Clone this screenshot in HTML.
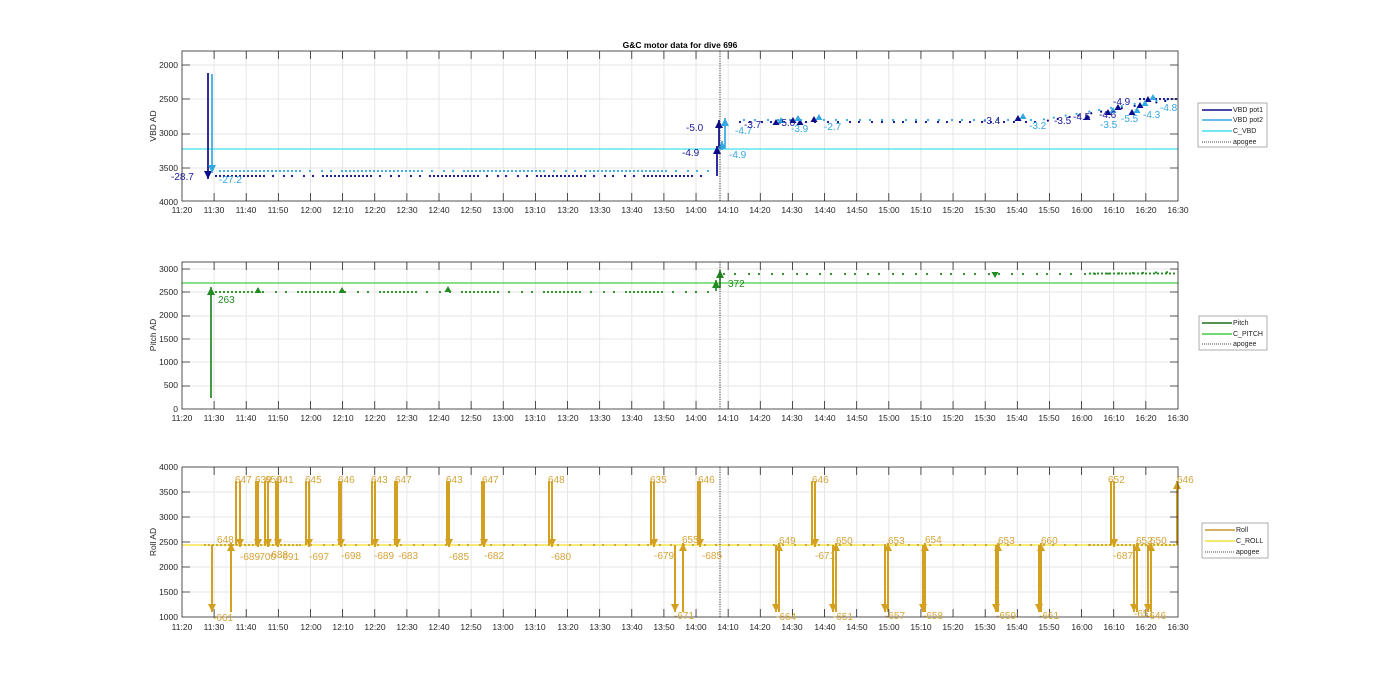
<!DOCTYPE html>
<html><head><meta charset="utf-8"><style>
html,body{margin:0;padding:0;background:#fff;}
svg{display:block;font-family:"Liberation Sans",sans-serif;}
.t{font-size:8.5px;fill:#262626;}
</style></head><body>
<svg width="1400" height="693" viewBox="0 0 1400 693" xmlns="http://www.w3.org/2000/svg">
<defs>
<marker id="mdk" markerUnits="userSpaceOnUse" markerWidth="8" markerHeight="8" refX="8" refY="4" orient="auto"><path d="M0,0L8,4L0,8z" fill="#0a0a8a"/></marker>
<marker id="mlb" markerUnits="userSpaceOnUse" markerWidth="8" markerHeight="8" refX="8" refY="4" orient="auto"><path d="M0,0L8,4L0,8z" fill="#33a7e0"/></marker>
<marker id="mgr" markerUnits="userSpaceOnUse" markerWidth="8" markerHeight="8" refX="8" refY="4" orient="auto"><path d="M0,0L8,4L0,8z" fill="#228b22"/></marker>
<marker id="mau" markerUnits="userSpaceOnUse" markerWidth="8" markerHeight="8" refX="8" refY="4" orient="auto"><path d="M0,0L8,4L0,8z" fill="#d4a020"/></marker>
<polygon id="tu" points="-3.5,2 3.5,2 0,-4"/>
<polygon id="td" points="-3.5,-2 3.5,-2 0,4"/>
</defs>
<rect width="1400" height="693" fill="#fff"/>
<!-- vertical grid -->
<g stroke="#e6e6e6" stroke-dasharray="1 31.129">
<line x1="213.6" x2="1160" y1="126" y2="126" stroke-width="150"/>
<line x1="213.6" x2="1160" y1="335.5" y2="335.5" stroke-width="147"/>
<line x1="213.6" x2="1160" y1="542" y2="542" stroke-width="150"/>
</g>
<!-- horizontal grid -->
<g stroke="#e6e6e6" stroke-width="1">
<path d="M182,65H1178M182,99H1178M182,134H1178M182,168H1178M182,269H1178M182,292H1178M182,316H1178M182,339H1178M182,362H1178M182,386H1178M182,492H1178M182,517H1178M182,542H1178M182,567H1178M182,592H1178"/>
</g>
<!-- C lines -->
<line x1="182" x2="1178" y1="149" y2="149" stroke="#40e0e8" stroke-width="1.2"/>
<line x1="182" x2="1178" y1="283" y2="283" stroke="#44cc44" stroke-width="1.2"/>
<line x1="182" x2="1178" y1="545" y2="545" stroke="#f5e64a" stroke-width="1.6"/>
<!-- dots -->
<g fill="none" stroke-linecap="round" stroke-width="2.2">
<path d="M216,176H712" stroke="#0a0a8a" stroke-dasharray="0 4 0 4 0 4 0 4 0 4 0 4 0 4 0 4 0 4 0 4 0 4 0 4 0 9 0 11 0 8 0 12 0 9 0 10"/>
<path d="M220,171H710" stroke="#33a7e0" stroke-dasharray="0 4 0 4 0 4 0 4 0 4 0 4 0 4 0 4 0 4 0 4 0 4 0 4 0 4 0 4 0 4 0 4 0 4 0 4 0 4 0 4 0 10 0 12 0 9 0 11"/>
<path d="M740,122L1040,122L1140,105L1178,99" stroke="#0a0a8a" stroke-dasharray="0 10 0 12 0 9 0 13"/>
<path d="M744,120L1040,120L1140,103L1178,98" stroke="#33a7e0" stroke-dasharray="0 11 0 13 0 10 0 12"/>
<path d="M1140,99H1178" stroke="#0a0a8a" stroke-dasharray="0 4"/>
<path d="M216,292H712" stroke="#228b22" stroke-dasharray="0 4 0 4 0 4 0 4 0 4 0 4 0 4 0 4 0 4 0 11 0 13 0 10 0 12"/>
<path d="M724,274H1090L1178,272" stroke="#228b22" stroke-dasharray="0 11 0 14 0 10 0 13"/>
<path d="M1090,273.5H1178" stroke="#228b22" stroke-dasharray="0 4"/>
<path d="M205,545H300" stroke="#c8a040" stroke-dasharray="0 4"/>
<path d="M300,545H1090" stroke="#c8a040" stroke-dasharray="0 11 0 13 0 9 0 12"/>
<path d="M1090,545H1178" stroke="#c8a040" stroke-dasharray="0 4"/>
</g>
<!-- VBD arrows -->
<g stroke-width="1.7">
<line x1="208" y1="73" x2="208" y2="179" stroke="#0a0a8a" marker-end="url(#mdk)"/>
<line x1="212" y1="74" x2="212" y2="173" stroke="#33a7e0" marker-end="url(#mlb)"/>
<line x1="717" y1="176" x2="717" y2="146" stroke="#0a0a8a" marker-end="url(#mdk)"/>
<line x1="719" y1="148" x2="719" y2="120" stroke="#0a0a8a" marker-end="url(#mdk)"/>
<line x1="722" y1="150" x2="722" y2="141" stroke="#33a7e0" marker-end="url(#mlb)"/>
<line x1="725" y1="148" x2="725" y2="118" stroke="#33a7e0" marker-end="url(#mlb)"/>
</g>
<g fill="#0a0a8a"><use href="#tu" x="776" y="123"/><use href="#tu" x="793" y="121"/><use href="#tu" x="800" y="123"/><use href="#tu" x="814" y="120"/><use href="#tu" x="1018" y="119"/><use href="#tu" x="1087" y="118"/><use href="#tu" x="1108" y="113"/><use href="#tu" x="1118" y="108"/><use href="#tu" x="1132" y="113"/><use href="#tu" x="1140" y="106"/><use href="#tu" x="1148" y="100"/></g>
<g fill="#33a7e0"><use href="#tu" x="781" y="121"/><use href="#tu" x="798" y="119"/><use href="#tu" x="819" y="118"/><use href="#tu" x="1023" y="117"/><use href="#tu" x="1113" y="111"/><use href="#tu" x="1137" y="111"/><use href="#tu" x="1145" y="104"/><use href="#tu" x="1153" y="98"/></g>
<!-- Pitch arrows -->
<g stroke="#228b22" stroke-width="1.7" marker-end="url(#mgr)">
<line x1="211" y1="398" x2="211" y2="287"/>
<line x1="716" y1="291" x2="716" y2="280"/>
<line x1="720" y1="288" x2="720" y2="270"/>
</g>
<g fill="#228b22"><use href="#tu" x="258" y="291"/><use href="#tu" x="342" y="291"/><use href="#tu" x="448" y="290"/><use href="#td" x="995" y="274"/></g>
<!-- Roll arrows -->
<g stroke="#d4a020" stroke-width="2" marker-end="url(#mau)">
<path d="M236,545V481M256,545V481M265,545V481M276,545V481M306,545V481M339,545V481M372,545V481M395,545V481M447,545V481M482,545V481M549,545V481M651,545V481M698,545V481M812,545V481M1111,545V481M1177,545V481"/>
</g>
<g stroke="#d4a020" stroke-width="2" marker-end="url(#mau)">
<line x1="240" y1="481" x2="240" y2="547"/><line x1="258" y1="481" x2="258" y2="547"/><line x1="268" y1="481" x2="268" y2="547"/><line x1="278" y1="481" x2="278" y2="547"/><line x1="309" y1="481" x2="309" y2="547"/><line x1="341" y1="481" x2="341" y2="547"/><line x1="375" y1="481" x2="375" y2="547"/><line x1="397" y1="481" x2="397" y2="547"/><line x1="449" y1="481" x2="449" y2="547"/><line x1="484" y1="481" x2="484" y2="547"/><line x1="552" y1="481" x2="552" y2="547"/><line x1="654" y1="481" x2="654" y2="547"/><line x1="700" y1="481" x2="700" y2="547"/><line x1="815" y1="481" x2="815" y2="547"/><line x1="1114" y1="481" x2="1114" y2="547"/>
<line x1="212" y1="545" x2="212" y2="612"/><line x1="675" y1="545" x2="675" y2="612"/><line x1="776" y1="545" x2="776" y2="612"/><line x1="833" y1="545" x2="833" y2="612"/><line x1="885" y1="545" x2="885" y2="612"/><line x1="923" y1="545" x2="923" y2="612"/><line x1="996" y1="545" x2="996" y2="612"/><line x1="1039" y1="545" x2="1039" y2="612"/><line x1="1134" y1="545" x2="1134" y2="612"/><line x1="1148" y1="545" x2="1148" y2="612"/>
<line x1="231" y1="612" x2="231" y2="543"/><line x1="683" y1="612" x2="683" y2="543"/><line x1="779" y1="612" x2="779" y2="543"/><line x1="836" y1="612" x2="836" y2="543"/><line x1="888" y1="612" x2="888" y2="543"/><line x1="925" y1="612" x2="925" y2="543"/><line x1="998" y1="612" x2="998" y2="543"/><line x1="1041" y1="612" x2="1041" y2="543"/><line x1="1137" y1="612" x2="1137" y2="543"/><line x1="1151" y1="612" x2="1151" y2="543"/>
</g>
<!-- apogee -->
<g stroke="#333" stroke-dasharray="1.2 1.2" stroke-width="1">
<path d="M720,51V201M720,262V409M720,467V617"/>
</g>
<!-- frames and ticks -->
<g fill="none" stroke="#262626" stroke-width="0.8">
<rect x="182" y="51" width="996" height="150"/>
<rect x="182" y="262" width="996" height="147"/>
<rect x="182" y="467" width="996" height="150"/>
</g>
<g stroke="#262626" stroke-width="8" stroke-dasharray="0.8 31.329">
<line x1="213.7" x2="1160" y1="55" y2="55"/><line x1="213.7" x2="1160" y1="197" y2="197"/>
<line x1="213.7" x2="1160" y1="266" y2="266"/><line x1="213.7" x2="1160" y1="405" y2="405"/>
<line x1="213.7" x2="1160" y1="471" y2="471"/><line x1="213.7" x2="1160" y1="613" y2="613"/>
</g>
<g stroke="#262626" stroke-width="0.7">
<path d="M182,65h8M182,99h8M182,134h8M182,168h8M1178,65h-8M1178,99h-8M1178,134h-8M1178,168h-8M182,269h8M182,292h8M182,316h8M182,339h8M182,362h8M182,386h8M1178,269h-8M1178,292h-8M1178,316h-8M1178,339h-8M1178,362h-8M1178,386h-8M182,492h8M182,517h8M182,542h8M182,567h8M182,592h8M1178,492h-8M1178,517h-8M1178,542h-8M1178,567h-8M1178,592h-8"/>
</g>
<text x="680" y="48" text-anchor="middle" style="font-size:8.5px;font-weight:bold;fill:#000">G&amp;C motor data for dive 696</text>
<g class="t" text-anchor="end">
<text x="178" y="68">2000</text><text x="178" y="102">2500</text><text x="178" y="136">3000</text><text x="178" y="171">3500</text><text x="178" y="205">4000</text>
<text x="178" y="272">3000</text><text x="178" y="295">2500</text><text x="178" y="318">2000</text><text x="178" y="342">1500</text><text x="178" y="365">1000</text><text x="178" y="388">500</text><text x="178" y="412">0</text>
<text x="178" y="470">4000</text><text x="178" y="495">3500</text><text x="178" y="520">3000</text><text x="178" y="545">2500</text><text x="178" y="570">2000</text><text x="178" y="595">1500</text><text x="178" y="620">1000</text>
</g>
<g class="t" text-anchor="middle">
<text transform="translate(156,126) rotate(-90)">VBD AD</text>
<text transform="translate(156,335) rotate(-90)">Pitch AD</text>
<text transform="translate(156,542) rotate(-90)">Roll AD</text>
</g>
<g class="t" text-anchor="middle">
<text y="213"><tspan x="182">11:20</tspan><tspan x="214">11:30</tspan><tspan x="246">11:40</tspan><tspan x="278">11:50</tspan><tspan x="311">12:00</tspan><tspan x="343">12:10</tspan><tspan x="375">12:20</tspan><tspan x="407">12:30</tspan><tspan x="439">12:40</tspan><tspan x="471">12:50</tspan><tspan x="503">13:00</tspan><tspan x="535">13:10</tspan><tspan x="568">13:20</tspan><tspan x="600">13:30</tspan><tspan x="632">13:40</tspan><tspan x="664">13:50</tspan><tspan x="696">14:00</tspan><tspan x="728">14:10</tspan><tspan x="760">14:20</tspan><tspan x="792">14:30</tspan><tspan x="825">14:40</tspan><tspan x="857">14:50</tspan><tspan x="889">15:00</tspan><tspan x="921">15:10</tspan><tspan x="953">15:20</tspan><tspan x="985">15:30</tspan><tspan x="1017">15:40</tspan><tspan x="1049">15:50</tspan><tspan x="1082">16:00</tspan><tspan x="1114">16:10</tspan><tspan x="1146">16:20</tspan><tspan x="1178">16:30</tspan></text>
<text y="421"><tspan x="182">11:20</tspan><tspan x="214">11:30</tspan><tspan x="246">11:40</tspan><tspan x="278">11:50</tspan><tspan x="311">12:00</tspan><tspan x="343">12:10</tspan><tspan x="375">12:20</tspan><tspan x="407">12:30</tspan><tspan x="439">12:40</tspan><tspan x="471">12:50</tspan><tspan x="503">13:00</tspan><tspan x="535">13:10</tspan><tspan x="568">13:20</tspan><tspan x="600">13:30</tspan><tspan x="632">13:40</tspan><tspan x="664">13:50</tspan><tspan x="696">14:00</tspan><tspan x="728">14:10</tspan><tspan x="760">14:20</tspan><tspan x="792">14:30</tspan><tspan x="825">14:40</tspan><tspan x="857">14:50</tspan><tspan x="889">15:00</tspan><tspan x="921">15:10</tspan><tspan x="953">15:20</tspan><tspan x="985">15:30</tspan><tspan x="1017">15:40</tspan><tspan x="1049">15:50</tspan><tspan x="1082">16:00</tspan><tspan x="1114">16:10</tspan><tspan x="1146">16:20</tspan><tspan x="1178">16:30</tspan></text>
<text y="630"><tspan x="182">11:20</tspan><tspan x="214">11:30</tspan><tspan x="246">11:40</tspan><tspan x="278">11:50</tspan><tspan x="311">12:00</tspan><tspan x="343">12:10</tspan><tspan x="375">12:20</tspan><tspan x="407">12:30</tspan><tspan x="439">12:40</tspan><tspan x="471">12:50</tspan><tspan x="503">13:00</tspan><tspan x="535">13:10</tspan><tspan x="568">13:20</tspan><tspan x="600">13:30</tspan><tspan x="632">13:40</tspan><tspan x="664">13:50</tspan><tspan x="696">14:00</tspan><tspan x="728">14:10</tspan><tspan x="760">14:20</tspan><tspan x="792">14:30</tspan><tspan x="825">14:40</tspan><tspan x="857">14:50</tspan><tspan x="889">15:00</tspan><tspan x="921">15:10</tspan><tspan x="953">15:20</tspan><tspan x="985">15:30</tspan><tspan x="1017">15:40</tspan><tspan x="1049">15:50</tspan><tspan x="1082">16:00</tspan><tspan x="1114">16:10</tspan><tspan x="1146">16:20</tspan><tspan x="1178">16:30</tspan></text>
</g>
<g style="font-size:10px">
<text x="171" y="180" fill="#1a1a9a">-28.7</text>
<text x="219" y="183" fill="#33a7e0">-27.2</text>
<text x="686" y="131" fill="#1a1a9a">-5.0</text>
<text x="682" y="156" fill="#1a1a9a">-4.9</text>
<text x="729" y="158" fill="#33a7e0">-4.9</text>
<text x="735" y="134" fill="#33a7e0">-4.7</text>
<text x="744" y="128" fill="#1a1a9a">-3.7</text>
<text x="778" y="126" fill="#1a1a9a">-5.0</text>
<text x="791" y="132" fill="#33a7e0">-3.9</text>
<text x="824" y="130" fill="#33a7e0">-2.7</text>
<text x="983" y="124" fill="#1a1a9a">-3.4</text>
<text x="1029" y="129" fill="#33a7e0">-3.2</text>
<text x="1054" y="124" fill="#1a1a9a">-3.5</text>
<text x="1073" y="120" fill="#1a1a9a">-4.5</text>
<text x="1099" y="118" fill="#1a1a9a">-4.6</text>
<text x="1113" y="105" fill="#1a1a9a">-4.9</text>
<text x="1100" y="128" fill="#33a7e0">-3.5</text>
<text x="1121" y="122" fill="#33a7e0">-5.5</text>
<text x="1143" y="118" fill="#33a7e0">-4.3</text>
<text x="1160" y="111" fill="#33a7e0">-4.8</text>
</g>
<g style="font-size:10px" fill="#228b22">
<text x="218" y="303">263</text><text x="728" y="287">372</text>
</g>
<g style="font-size:10px" fill="#d4a53a">
<text x="235" y="483">647</text><text x="255" y="483">639</text><text x="265" y="483">650</text><text x="277" y="483">641</text>
<text x="305" y="483">645</text><text x="338" y="483">646</text><text x="371" y="483">643</text><text x="395" y="483">647</text>
<text x="446" y="483">643</text><text x="482" y="483">647</text><text x="548" y="483">648</text><text x="650" y="483">635</text>
<text x="698" y="483">646</text><text x="812" y="483">646</text><text x="1108" y="483">652</text><text x="1177" y="483">646</text>
<text x="217" y="543">648</text><text x="682" y="543">655</text><text x="779" y="544">649</text><text x="836" y="544">650</text>
<text x="888" y="544">653</text><text x="925" y="543">654</text><text x="998" y="544">653</text><text x="1041" y="544">660</text>
<text x="1136" y="544">652</text><text x="1150" y="544">650</text>
<text x="240" y="560">-689</text><text x="256" y="560">-700</text><text x="268" y="558">-688</text><text x="279" y="560">-691</text>
<text x="309" y="560">-697</text><text x="341" y="559">-698</text><text x="374" y="559">-689</text><text x="398" y="559">-683</text>
<text x="449" y="560">-685</text><text x="484" y="559">-682</text><text x="551" y="560">-680</text><text x="654" y="559">-679</text>
<text x="702" y="559">-685</text><text x="815" y="559">-671</text><text x="1113" y="559">-687</text>
<text x="213" y="621">-661</text><text x="674" y="619">-671</text><text x="776" y="620">-664</text><text x="833" y="620">-651</text>
<text x="885" y="619">-657</text><text x="923" y="619">-658</text><text x="996" y="619">-659</text><text x="1039" y="619">-661</text>
<text x="1134" y="617">-651</text><text x="1146" y="619">-646</text>
</g>
<g style="font-size:7px" fill="#222">
<rect x="1198" y="103" width="69" height="44" fill="#fff" stroke="#999" stroke-width="0.8"/>
<line x1="1202" y1="110" x2="1232" y2="110" stroke="#0a0a8a" stroke-width="1.5"/><text x="1233" y="112">VBD pot1</text>
<line x1="1202" y1="120" x2="1232" y2="120" stroke="#33a7e0" stroke-width="1.5"/><text x="1233" y="122">VBD pot2</text>
<line x1="1202" y1="131" x2="1232" y2="131" stroke="#40e0e8" stroke-width="1.5"/><text x="1233" y="133">C_VBD</text>
<line x1="1202" y1="142" x2="1232" y2="142" stroke="#444" stroke-dasharray="1,1"/><text x="1233" y="144">apogee</text>
<rect x="1199" y="316" width="68" height="34" fill="#fff" stroke="#999" stroke-width="0.8"/>
<line x1="1202" y1="323" x2="1232" y2="323" stroke="#1a6e1a" stroke-width="1.5"/><text x="1233" y="325">Pitch</text>
<line x1="1202" y1="334" x2="1232" y2="334" stroke="#44cc44" stroke-width="1.5"/><text x="1233" y="336">C_PITCH</text>
<line x1="1202" y1="344" x2="1232" y2="344" stroke="#444" stroke-dasharray="1,1"/><text x="1233" y="346">apogee</text>
<rect x="1202" y="523" width="66" height="35" fill="#fff" stroke="#999" stroke-width="0.8"/>
<line x1="1205" y1="530" x2="1235" y2="530" stroke="#c8982a" stroke-width="1.5"/><text x="1236" y="532">Roll</text>
<line x1="1205" y1="541" x2="1235" y2="541" stroke="#f0e040" stroke-width="1.5"/><text x="1236" y="543">C_ROLL</text>
<line x1="1205" y1="552" x2="1235" y2="552" stroke="#444" stroke-dasharray="1,1"/><text x="1236" y="554">apogee</text>
</g>
</svg>
</body></html>
